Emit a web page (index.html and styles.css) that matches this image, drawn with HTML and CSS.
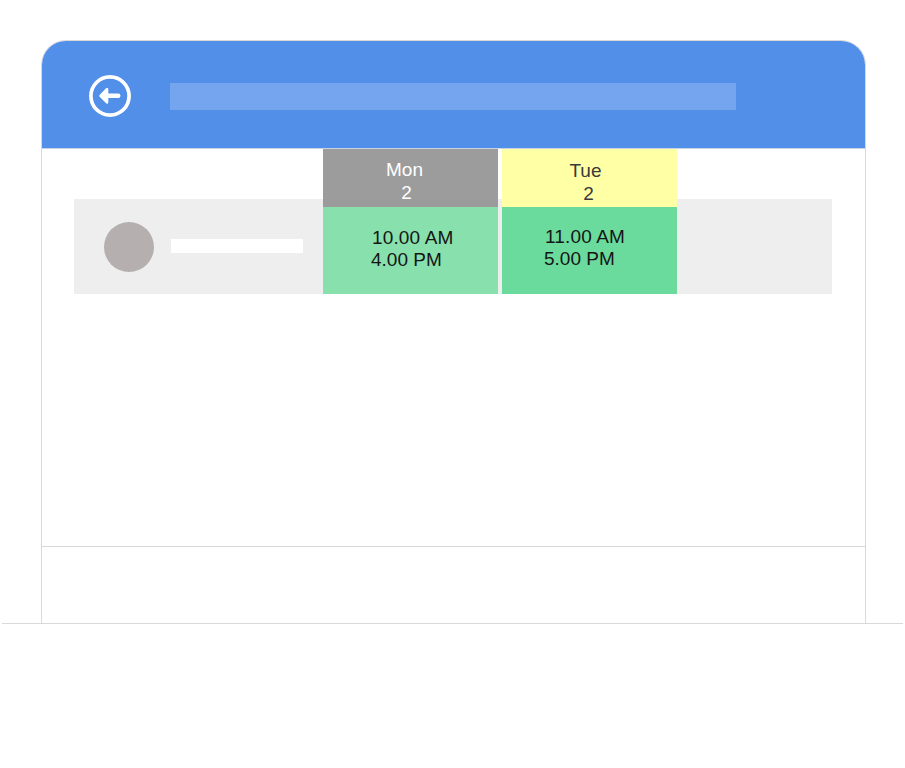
FILE: index.html
```html
<!DOCTYPE html>
<html lang="en">
<head>
<meta charset="utf-8">
<title>Schedule</title>
<link rel="stylesheet" href="styles.css">
</head>
<body>
<div class="page">
  <main class="frame">
    <header class="topbar">
      <svg class="back" viewBox="0 0 42 42" width="42" height="42" aria-hidden="true">
        <circle cx="21" cy="21" r="19.1" fill="none" stroke="#fff" stroke-width="3.7"/>
        <path d="M11.5 20.8 L18 14.2 V27.4 Z" fill="#fff" stroke="#fff" stroke-width="2.6" stroke-linejoin="round"/>
        <path d="M18 20.8 H29.2" fill="none" stroke="#fff" stroke-width="4.6" stroke-linecap="round"/>
      </svg>
      <div class="title-bar"></div>
    </header>
    <section class="board">
      <div class="row">
        <div class="person">
          <div class="avatar"></div>
          <div class="name-bar"></div>
        </div>
        <div class="days">
          <div class="day day-mon">
            <div class="day-head head-mon"><span>Mon</span><span class="num">2</span></div>
            <div class="slot slot-mon"><span class="start">10.00 AM</span><span>4.00 PM</span></div>
          </div>
          <div class="day day-tue">
            <div class="day-head head-tue"><span>Tue</span><span class="num">2</span></div>
            <div class="slot slot-tue"><span class="start">11.00 AM</span><span>5.00 PM</span></div>
          </div>
        </div>
      </div>
    </section>
    <footer class="foot"></footer>
  </main>
  <div class="baseline"></div>
</div>
</body>
</html>
```
FILE: styles.css
```css
* { box-sizing: border-box; }
html, body { margin: 0; background: #fff; }
body { font-family: "Liberation Sans", Arial, sans-serif; }
.page { padding-top: 40px; }
.frame {
  width: 825px;
  height: 583px;
  margin-left: 41px;
  border: 1px solid #d9d9d9;
  border-bottom: 0;
  border-radius: 25px 25px 0 0;
  display: flex;
  flex-direction: column;
  overflow: hidden;
}
.topbar {
  height: 108px;
  flex: none;
  background: #518fe8;
  border-bottom: 1px solid #c5d3e6;
  display: flex;
  align-items: center;
  padding: 3px 0 0 47px;
}
.back { flex: none; }
.title-bar {
  width: 566px;
  height: 27px;
  margin-left: 39px;
  margin-top: 1px;
  background: #75a5ee;
}
.board { flex: 1; padding: 50px 33px 0 32px; }
.row {
  height: 95px;
  background: #eee;
  display: flex;
}
.person {
  width: 249px;
  flex: none;
  display: flex;
  align-items: center;
  padding: 0 0 0 30px;
}
.avatar {
  width: 50px;
  height: 50px;
  border-radius: 50%;
  background: #b5b0af;
  flex: none;
}
.name-bar {
  width: 132px;
  height: 14px;
  margin: 0 0 2px 17px;
  background: #fff;
  flex: none;
}
.days { display: flex; gap: 4px; margin-top: -50px; height: 145px; }
.day { width: 175px; display: flex; flex-direction: column; }
.day-head {
  height: 58px;
  flex: none;
  display: flex;
  flex-direction: column;
  align-items: center;
  font-size: 19px;
  line-height: 23px;
}
.head-mon { background: rgba(145, 145, 145, .9); color: #fff; padding: 9px 12px 0 0; }
.head-tue { background: #ffffa6; color: #3a3a3a; padding: 10px 8px 0 0; }
.num { padding-left: 4px; }
.head-tue .num { padding-left: 6px; }
.slot {
  flex: 1;
  display: flex;
  flex-direction: column;
  font-size: 19px;
  line-height: 22px;
  color: #151515;
}
.start { padding-left: 1px; letter-spacing: .15px; }
.slot-mon { background: #88e0ac; padding: 20px 0 0 48px; }
.slot-tue { background: #6adb9c; padding: 19px 0 0 42px; }
.foot { height: 77px; flex: none; border-top: 1px solid #d9d9d9; }
.baseline { height: 1px; margin: 0 2px; background: #d9d9d9; }
```
